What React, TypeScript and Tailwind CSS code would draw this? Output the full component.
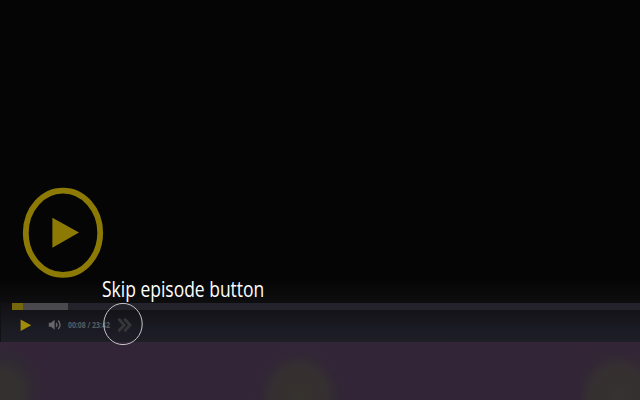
function BigPlay() {
  return (
    <svg className="block h-[92px] w-[82px]" viewBox="0 0 82 92" aria-label="Play">
      <ellipse cx="41" cy="45.8" rx="37.2" ry="42.1" fill="none" stroke="#8c7a05" strokeWidth="5.8" />
      <path d="M30.4 30.8 L57 45.6 L30.4 60.8 Z" fill="#8c7a05" />
    </svg>
  );
}

function Volume() {
  return (
    <svg className="ml-4 block h-3 w-[14px]" viewBox="0 0 14 12" aria-label="Volume">
      <path d="M0.8 3.8 H3 L6.6 0.8 V10.8 L3 7.8 H0.8 Z" fill="#68686c" />
      <path d="M8.2 3.8 Q9.6 5.8 8.2 7.8 M10.2 1.5 Q13.8 5.8 10.2 10.1" fill="none" stroke="#68686c" strokeWidth="1.4" />
    </svg>
  );
}

function Controls() {
  return (
    <div className="flex h-[30px] items-center pl-[19px]">
      <svg className="block h-3 w-3" viewBox="0 0 12 12" aria-label="Play">
        <path d="M0.6 0.4 L11.2 6.2 L0.6 12 Z" fill="#a08b08" />
      </svg>
      <Volume />
      <span className="ml-[6px] block w-[43px] origin-left scale-x-[0.86] whitespace-nowrap font-['Open_Sans',sans-serif] text-[8px] leading-none font-bold text-[#5c5c60]">
        00:08 / 23:42
      </span>
      <svg className="ml-[6px] block h-4 w-[15px]" viewBox="0 0 15 16" aria-label="Skip episode">
        <path d="M1.5 1.8 L7.2 8 L1.5 14.2 M7.3 1.8 L13 8 L7.3 14.2" fill="none" stroke="#36363a" strokeWidth="2.8" />
      </svg>
    </div>
  );
}

export default function App() {
  return (
    <main className="relative flex h-[400px] w-[640px] flex-col overflow-hidden bg-[#050505]">
      <section className="flex h-[303px] flex-col bg-[linear-gradient(to_bottom,#050505_280px,#0e0e10_303px)] pt-[187px] pl-[22px]">
        <BigPlay />
      </section>
      <section className="h-[39px] border-l border-[#111014] bg-[linear-gradient(to_bottom,#111114_0px,#14141a_10px,#191a20_22px,#1c1b25_28px,#1e1e26_39px)]">
        <div className="ml-[11px] flex h-[7px] bg-[#24232b]">
          <div className="w-[11px] bg-[#75670b]" />
          <div className="w-[45px] bg-[#4a4a4e]" />
        </div>
        <Controls />
      </section>
      <section className="h-[58px] bg-[radial-gradient(ellipse_40px_44px_at_2px_50px,#34302e_0%,#333030_45%,#302834_80%,#32253700_110%),radial-gradient(ellipse_50px_54px_at_299px_54px,#36322d_0%,#352f31_55%,#30283480_78%,#32253700_100%),radial-gradient(ellipse_50px_52px_at_618px_53px,#36322f_0%,#352f31_55%,#30283480_78%,#32253700_100%),linear-gradient(to_right,#332537,#322538_45%,#332536)]" />

      <div className="absolute top-[278px] left-[102px] origin-left scale-x-[0.832] whitespace-nowrap font-['Open_Sans',sans-serif] text-[21px] leading-[22px] text-white">
        Skip episode button
      </div>
      <svg className="absolute top-[302px] left-[102px] h-11 w-[42px]" viewBox="0 0 42 44" aria-hidden="true">
        <ellipse cx="21" cy="22" rx="19.2" ry="20.6" fill="none" stroke="#c5c5c7" strokeWidth="1" />
      </svg>
    </main>
  );
}
